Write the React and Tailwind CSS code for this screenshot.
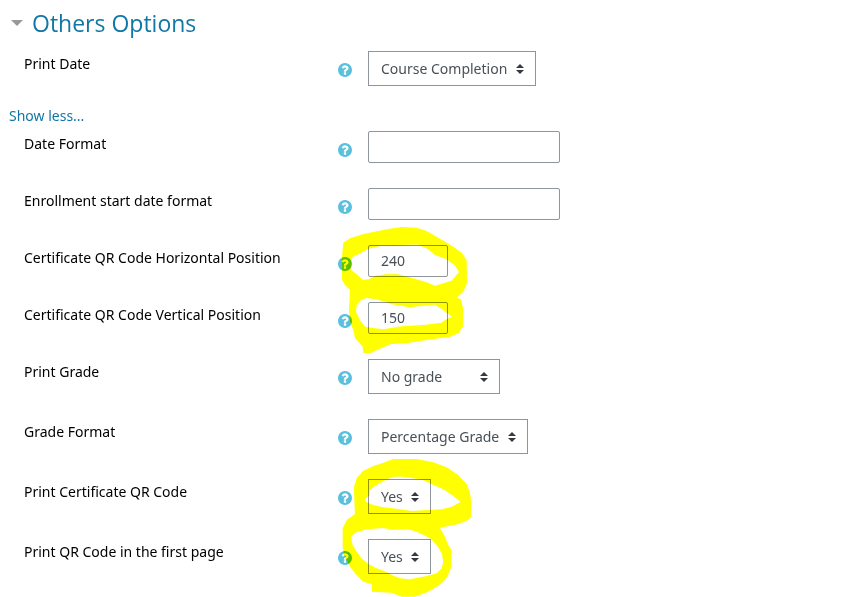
import React, { useState } from 'react';

const fields = [
  { id: 'dateformat', label: 'Date Format', type: 'text', value: '', width: 'w-48' },
  { id: 'enrolformat', label: 'Enrollment start date format', type: 'text', value: '', width: 'w-48' },
  { id: 'qrx', label: 'Certificate QR Code Horizontal Position', type: 'text', value: '240', width: 'w-20' },
  { id: 'qry', label: 'Certificate QR Code Vertical Position', type: 'text', value: '150', width: 'w-20' },
  { id: 'grade', label: 'Print Grade', type: 'select', options: ['No grade', 'Course grade'], width: 'w-[132px]' },
  { id: 'gradefmt', label: 'Grade Format', type: 'select', options: ['Percentage Grade', 'Points Grade', 'Letter Grade'], width: 'w-40' },
  { id: 'printqr', label: 'Print Certificate QR Code', type: 'select', options: ['Yes', 'No'], width: 'w-[63px]' },
  { id: 'qrfirst', label: 'Print QR Code in the first page', type: 'select', options: ['Yes', 'No'], width: 'w-[63px]' },
];

function HelpButton({ label }) {
  return (
    <button type="button" aria-label={`Help with ${label}`} className="mt-3 size-3.5 cursor-pointer">
      <svg viewBox="0 0 1536 1536" className="block size-3.5" fill="#5bc0de">
        <path d="M896 1248v-192q0-14-9-23t-23-9H672q-14 0-23 9t-9 23v192q0 14 9 23t23 9h192q14 0 23-9t9-23zm256-672q0-88-55.500-163T958 297t-170-41q-243 0-371 213-15 24 8 42l132 100q7 6 19 6 16 0 25-12 53-68 86-92 34-24 86-24 48 0 85.500 26t37.500 59q0 38-20 61t-68 45q-63 28-115.500 86.500T640 892v36q0 14 9 23t23 9h192q14 0 23-9t9-23q0-19 21.500-49.500T972 829q32-18 49-28.500t46-35 44.500-48 28-60.500 12.500-81zm384 192q0 209-103 385.500T1153.500 1433 768 1536t-385.500-103T103 1153.500 0 768t103-385.500T382.500 103 768 0t385.500 103T1433 382.500 1536 768z" />
      </svg>
    </button>
  );
}

function Select({ id, options, width }) {
  return (
    <div className={`relative ${width}`}>
      <select id={id} className="block h-[35px] w-full appearance-none border border-[#8f959e] bg-white pl-3 text-sm text-[#495057]">
        {options.map(option => (
          <option key={option}>{option}</option>
        ))}
      </select>
      <svg viewBox="0 0 4 5" className="pointer-events-none absolute top-[13px] right-3 h-2.5 w-2" fill="#343a40">
        <path d="M2 0L0 2h4zm0 5L0 3h4z" />
      </svg>
    </div>
  );
}

function Field({ id, label, type, value, options, width }) {
  const [text, setText] = useState(value);

  return (
    <div className="grid grid-cols-[314px_30px_1fr] items-start">
      <label htmlFor={id} className="mt-[3px] text-sm text-black">{label}</label>
      <HelpButton label={label} />
      {type === 'select' ? (
        <Select id={id} options={options} width={width} />
      ) : (
        <input
          id={id}
          type="text"
          value={text}
          onChange={e => setText(e.target.value)}
          className={`h-8 rounded-xs border border-[#8f959e] bg-white px-3 pb-0.5 text-sm text-[#495057] ${width}`}
        />
      )}
    </div>
  );
}

// Freehand marker strokes over the QR code settings
function Marker() {
  return (
    <svg
      width="860"
      height="597"
      aria-hidden="true"
      className="pointer-events-none absolute top-0 left-0 mix-blend-multiply"
      fill="#ffff00"
      fillRule="evenodd"
    >
      <g transform="translate(330 220) scale(0.3333)">
        <path d="M40 68L60 55 100 42 145 33 175 27 215 21 260 23 290 33 320 50 345 65 370 80 395 98 410 120 411 190 400 215 380 233 393 238 399 265 399 320 385 340 360 350 290 360 240 368 180 373 135 393 123 399 100 399 98 380 75 355 70 330 60 305 57 270 60 210 45 195 36 180 36 110Z
          M66 112L85 103 120 85 155 77 195 78 235 74 265 74 295 88 315 105 350 118 375 137 387 156 375 170 365 182 345 188 315 197 290 187 250 175 200 162 165 163 135 168 118 177 100 180 85 167 62 148Z
          M108 234L135 237 165 245 185 253 240 262 290 256 315 254 340 270 365 290 345 300 335 308 280 315 215 319 160 328 130 324 105 320 90 300 78 275 80 255 93 240Z" />
      </g>
      <g transform="translate(330 450) scale(0.3333)">
        <path d="M72 110L80 85 100 62 130 48 160 38 190 27 260 27 310 37 350 52 385 75 412 105 420 130 423 150 423 200 410 212 385 222 330 233 345 260 355 285 365 300 363 355 352 380 340 395 320 410 295 425 255 440 215 440 185 428 126 425 126 403 100 395 75 370 60 350 42 315 38 290 38 235 50 210 75 192 73 150Z
          M105 148L118 136 120 120 135 108 160 93 190 80 220 80 245 84 280 90 310 105 340 118 370 138 392 156 365 170 335 178 280 181 245 183 200 176 160 172 130 165 108 155Z
          M63 260L75 248 110 238 160 234 190 240 230 238 255 243 275 252 300 265 320 285 335 310 340 335 335 355 320 370 290 378 240 388 210 385 185 375 170 366 140 355 115 342 95 325 80 305 68 285Z" />
      </g>
    </svg>
  );
}

function App() {
  return (
    <main className="relative bg-white pt-[7px] pb-[23px] font-['Noto_Sans','Open_Sans',sans-serif]">
      <h3 className="px-[11px] font-['Open_Sans','Noto_Sans',sans-serif] text-[23px] leading-8 text-[#1177a6]">
        <a href="#others" className="flex items-center gap-[9px]">
          <svg viewBox="0 0 12 6" className="h-1.5 w-3" fill="#999999">
            <path d="M0 0h12L6 6z" />
          </svg>
          Others Options
        </a>
      </h3>
      <form>
        <div className="px-6 pt-3">
          <Field id="printdate" label="Print Date" type="select" options={['Course Completion', 'Certificate issue']} width="w-[168px]" />
        </div>
        <a href="#less" className="mt-5 block px-[9px] text-sm text-[#1177a6]">Show less...</a>
        <div className="mt-[5px] flex flex-col gap-[25px] px-6">
          {fields.map(field => (
            <Field key={field.id} {...field} />
          ))}
        </div>
      </form>
      <Marker />
    </main>
  );
}

export default App;
